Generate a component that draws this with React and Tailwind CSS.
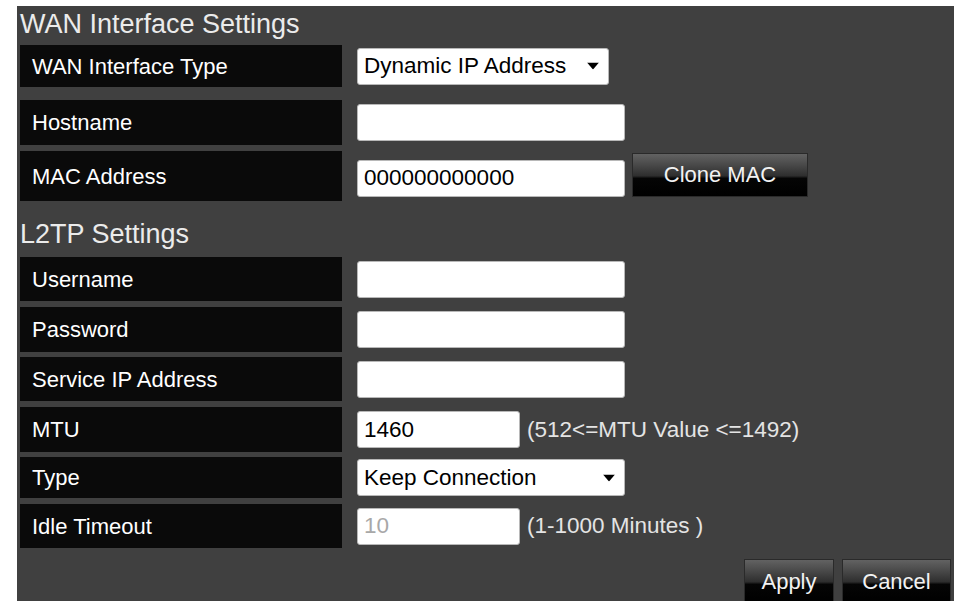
import React from "react";

const font = { fontFamily: '"Liberation Sans", Arial, sans-serif' };

function Label({ children }) {
  return (
    <div className="w-[322px] h-full bg-[#0a0a0a] flex items-center pl-3 text-white text-[22px]">
      {children}
    </div>
  );
}

function TextInput({ width = "w-[268px]", value = "", disabled = false }) {
  return (
    <input
      type="text"
      defaultValue={value}
      disabled={disabled}
      className={`${width} h-[37px] bg-white border border-[#b8b8b8] rounded-[3px] px-[6px] text-[22.5px] outline-none ${
        disabled ? "text-[#a8a8a8]" : "text-black"
      }`}
    />
  );
}

function Select({ width, value, options }) {
  return (
    <div className={`relative ${width} h-[37px]`}>
      <select
        defaultValue={value}
        className="appearance-none w-full h-full bg-white border border-[#b8b8b8] rounded-[3px] pl-[6px] pr-8 text-[22.5px] text-black outline-none"
      >
        {options.map((o) => (
          <option key={o}>{o}</option>
        ))}
      </select>
      {/* caret */}
      <svg
        className="pointer-events-none absolute right-[10px] top-1/2 -translate-y-1/2"
        width="12"
        height="7"
        viewBox="0 0 12 7"
      >
        <path d="M0 0h12L6 7z" fill="#000" />
      </svg>
    </div>
  );
}

function GlossButton({ width, children }) {
  return (
    <button className={`${width} h-[44px] text-[22px] text-[#f2f2f2] border border-[#2a2a2a] bg-[linear-gradient(to_bottom,#626262_0%,#4a4a4a_25%,#2e2e2e_52%,#050505_58%,#000_100%)]`}>
      {children}
    </button>
  );
}

function Row({ h, mt = "", label, children }) {
  return (
    <div className={`flex items-center ${h} ${mt}`}>
      <Label>{label}</Label>
      <div className="flex items-center ml-[15px]">{children}</div>
    </div>
  );
}

export default function App() {
  return (
    <div className="h-[601px] overflow-hidden bg-white pl-[17px] pt-[6px]" style={font}>
      <div className="w-[937px] h-[595px] bg-[#404040] pl-[3px] pr-[3px]">
        {/* ===== WAN interface ===== */}
        <h2 className="h-[39px] text-[27px] leading-[36px] text-[#ebebeb]">WAN Interface Settings</h2>

        <Row h="h-[42px]" label="WAN Interface Type">
          <Select
            width="w-[252px]"
            value="Dynamic IP Address"
            options={["Static IP Address", "Dynamic IP Address", "PPPoE", "PPTP", "L2TP"]}
          />
        </Row>

        <Row h="h-[45px]" mt="mt-[13px]" label="Hostname">
          <TextInput />
        </Row>

        <Row h="h-[50px]" mt="mt-[6px]" label="MAC Address">
          <div className="mt-[4px]">
            <TextInput value="000000000000" />
          </div>
          <div className="ml-[7px] -mt-[3px]">
            <GlossButton width="w-[176px]">Clone MAC</GlossButton>
          </div>
        </Row>

        {/* ===== L2TP ===== */}
        <h2 className="h-[56px] pt-[15px] text-[27px] leading-[36px] text-[#ebebeb]">L2TP Settings</h2>

        <Row h="h-[44px]" label="Username">
          <TextInput />
        </Row>
        <Row h="h-[45px]" mt="mt-[6px]" label="Password">
          <TextInput />
        </Row>
        <Row h="h-[44px]" mt="mt-[5px]" label="Service IP Address">
          <TextInput />
        </Row>
        <Row h="h-[45px]" mt="mt-[6px]" label="MTU">
          <TextInput width="w-[163px]" value="1460" />
          <span className="ml-[7px] text-[22.5px] text-[#e4e4e4]">(512&lt;=MTU Value &lt;=1492)</span>
        </Row>
        <Row h="h-[41px]" mt="mt-[5px]" label="Type">
          <Select
            width="w-[268px]"
            value="Keep Connection"
            options={["Keep Connection", "Automatic Connection", "Manual Connection"]}
          />
        </Row>
        <Row h="h-[44px]" mt="mt-[6px]" label="Idle Timeout">
          <TextInput width="w-[163px]" value="10" disabled />
          <span className="ml-[7px] text-[22.5px] text-[#e4e4e4]">(1-1000 Minutes )</span>
        </Row>

        <div className="mt-[11px] flex justify-end gap-[8px]">
          <GlossButton width="w-[90px]">Apply</GlossButton>
          <GlossButton width="w-[109px]">Cancel</GlossButton>
        </div>
      </div>
    </div>
  );
}
